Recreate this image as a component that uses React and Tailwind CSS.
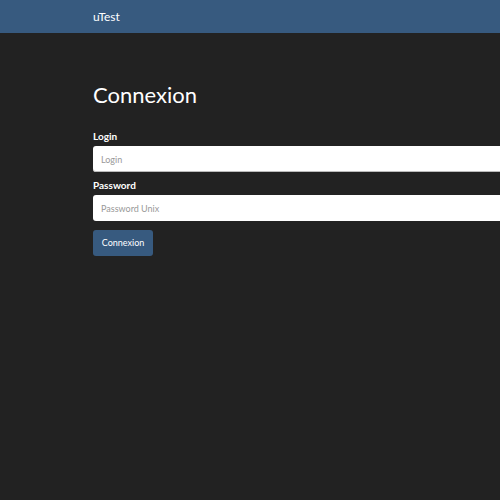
import React from 'react';

export default function App() {
  return (
    <div className="min-h-screen w-[500px] h-[500px] overflow-hidden bg-[#222222] text-white" style={{ fontFamily: 'Lato, "Open Sans", sans-serif' }}>
      {/* Navbar */}
      <header className="h-[33px] bg-[#375a7f] flex items-center pl-[93px]">
        <span className="text-[12px] leading-none text-white">uTest</span>
      </header>

      {/* Login form */}
      <main className="pl-[93px] pt-[48px]">
        <h1 className="text-[22px] leading-[27px] font-normal text-white">Connexion</h1>
        <form className="mt-[22px] w-[420px]">
          <label className="block text-[10px] font-bold leading-[12px] mb-[4px]">Login</label>
          <input
            type="text"
            placeholder="Login"
            className="block w-full h-[26px] rounded-[3px] bg-white border-0 px-[8px] text-[9px] text-[#444] placeholder:text-[#999] outline-none shadow-[inset_0_-1px_0_#bbb]"
          />
          <label className="block text-[10px] font-bold leading-[12px] mt-[7px] mb-[4px]">Password</label>
          <input
            type="password"
            placeholder="Password Unix"
            className="block w-full h-[26px] rounded-[3px] bg-white border-0 px-[8px] text-[9px] text-[#444] placeholder:text-[#999] outline-none"
          />
          <button
            type="button"
            className="mt-[9px] h-[26px] w-[60px] rounded-[3px] bg-[#375a7f] text-[9px] text-white"
          >
            Connexion
          </button>
        </form>
      </main>
    </div>
  );
}
